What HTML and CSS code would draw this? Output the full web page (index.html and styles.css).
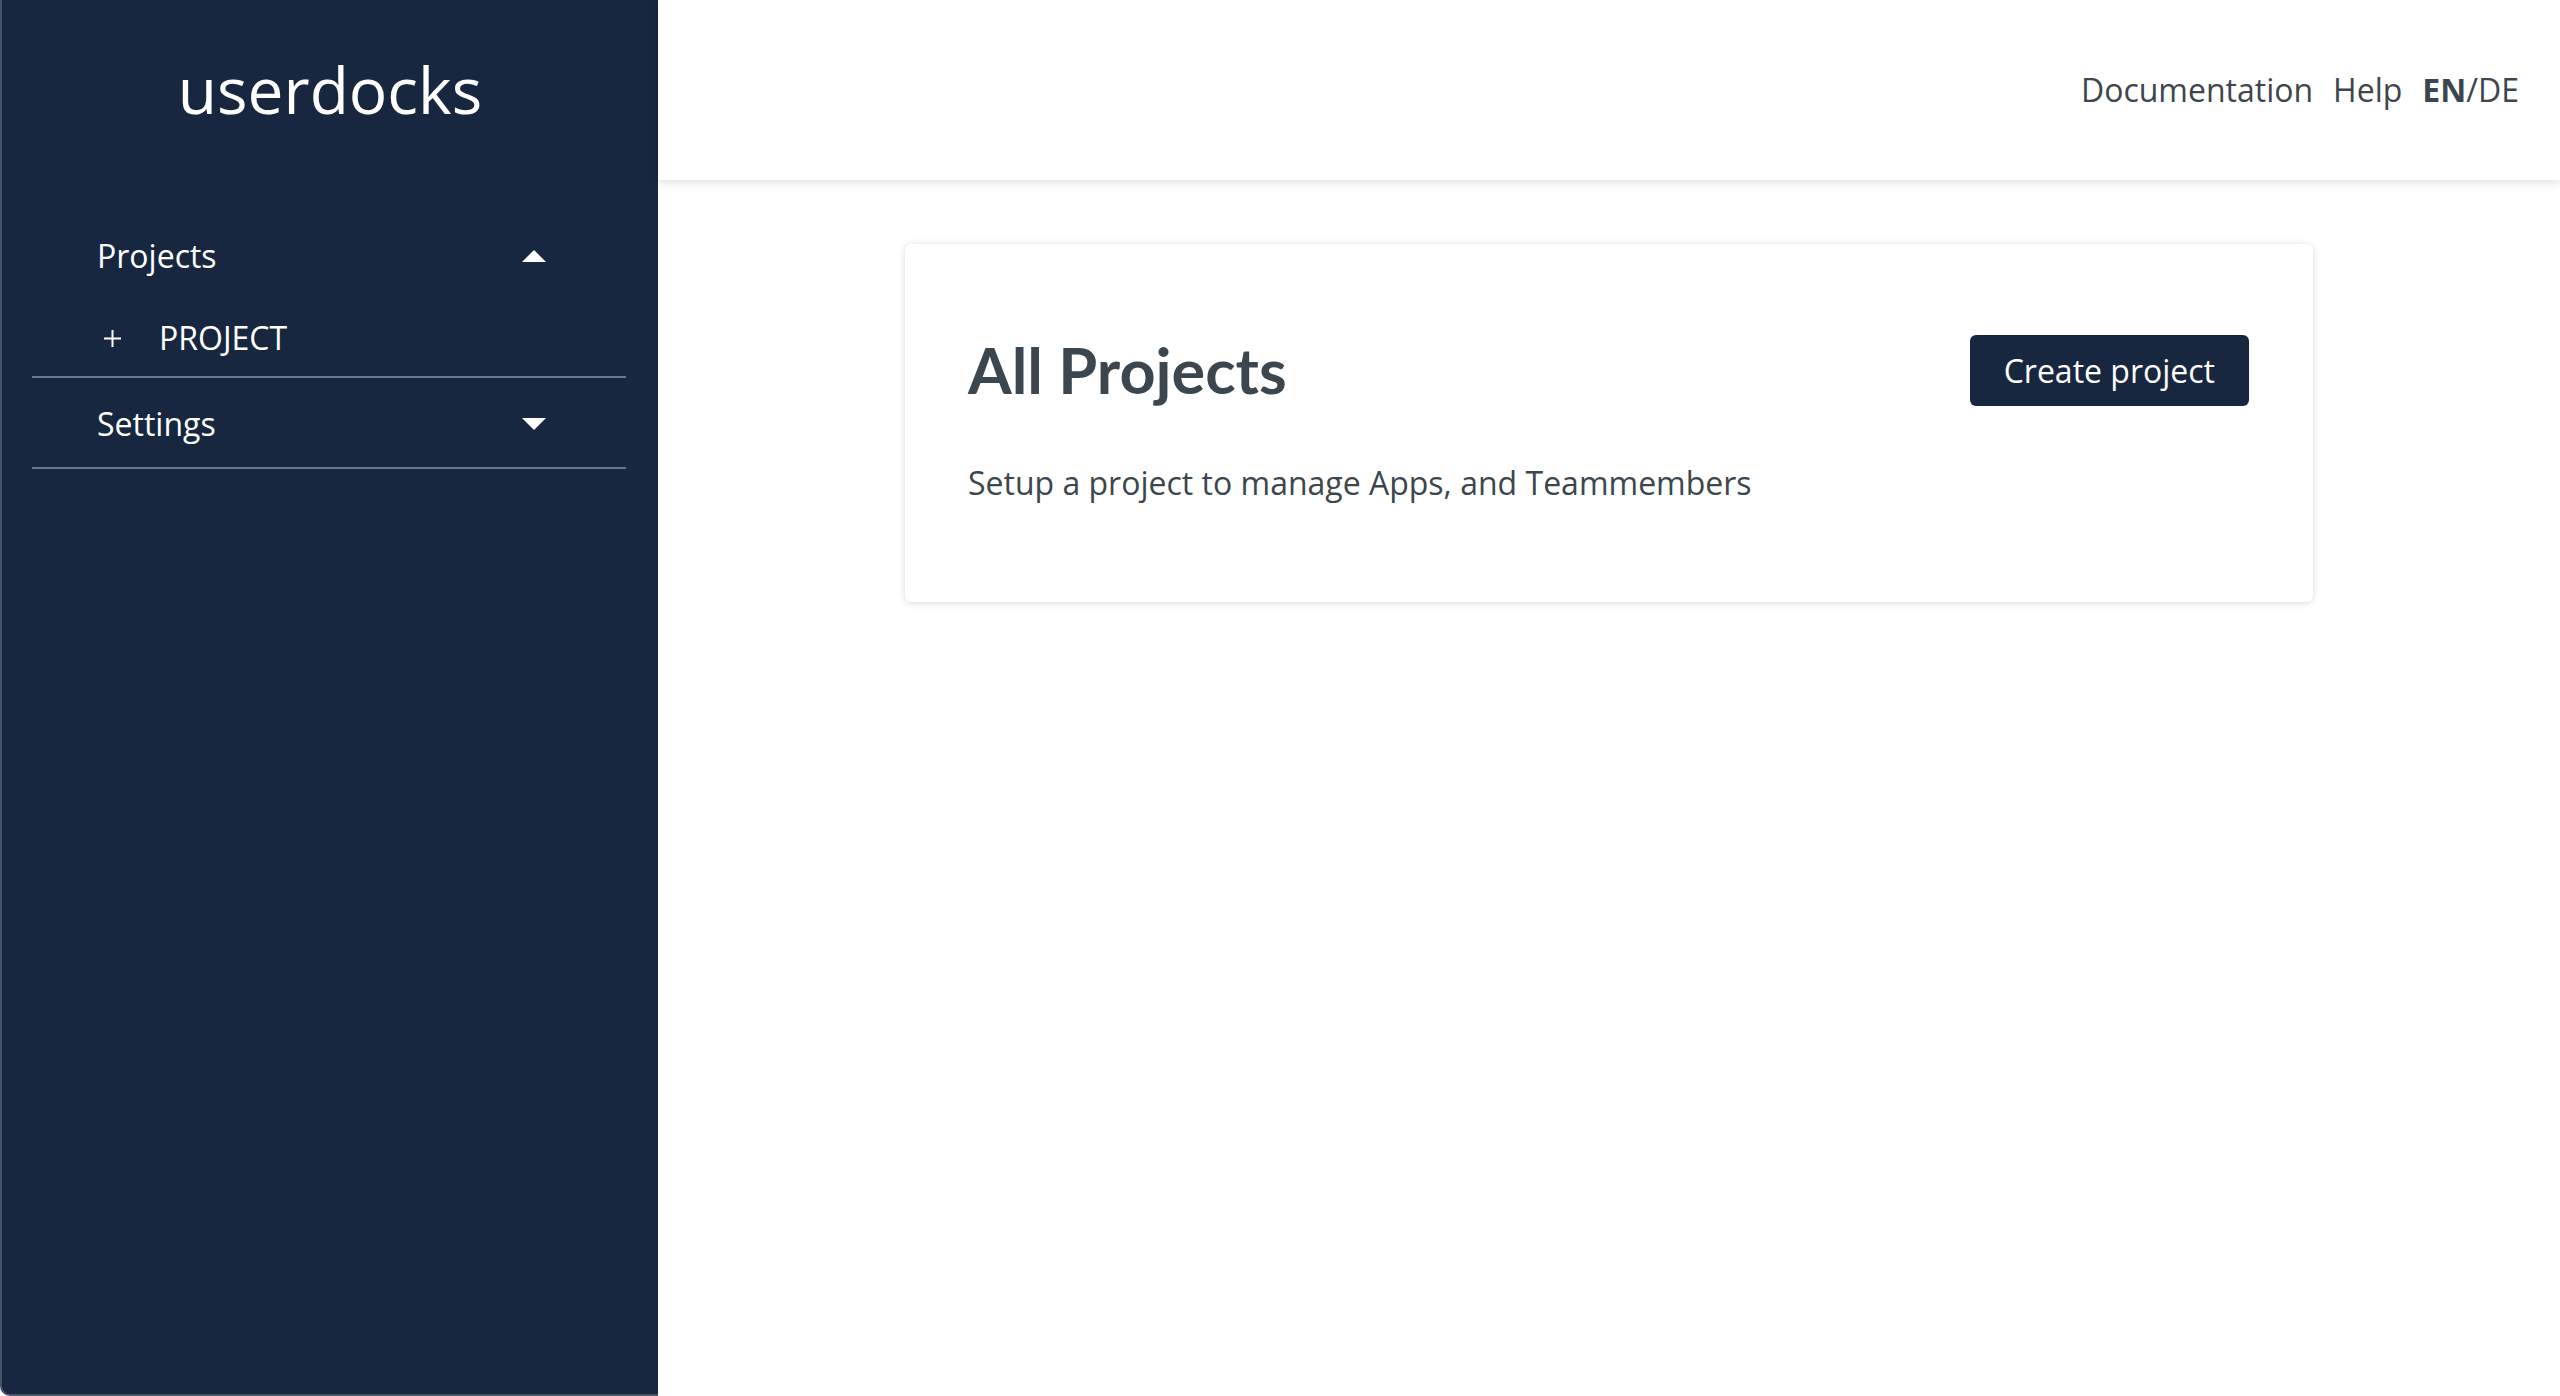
FILE: index.html
```html
<!DOCTYPE html>
<html lang="en">
<head>
<meta charset="utf-8">
<title>userdocks</title>
<link rel="stylesheet" href="styles.css">
</head>
<body>
<div class="app">
  <aside class="sidebar">
    <div class="logo">userdocks</div>
    <nav class="menu">
      <div class="group">
        <div class="menu-row">
          <span>Projects</span>
          <svg class="caret" width="24" height="12" viewBox="0 0 24 12"><path d="M0 12 L12 0 L24 12 Z" fill="#fff"/></svg>
        </div>
        <div class="sub-row">
          <svg class="plus" width="19" height="19" viewBox="0 0 19 19"><path d="M9.5 1 V18 M1 9.5 H18" stroke="#fff" stroke-width="2" fill="none"/></svg>
          <span>PROJECT</span>
        </div>
      </div>
      <div class="group">
        <div class="menu-row">
          <span>Settings</span>
          <svg class="caret" width="24" height="12" viewBox="0 0 24 12"><path d="M0 0 L24 0 L12 12 Z" fill="#fff"/></svg>
        </div>
      </div>
    </nav>
  </aside>
  <div class="main">
    <header class="topbar">
      <a class="nav-link">Documentation</a>
      <a class="nav-link">Help</a>
      <span class="nav-link lang"><b>EN</b>/DE</span>
    </header>
    <section class="content">
      <div class="card">
        <div class="card-head">
          <h1 class="card-title">All Projects</h1>
          <button class="btn">Create project</button>
        </div>
        <p class="card-text">Setup a project to manage Apps, and Teammembers</p>
      </div>
    </section>
  </div>
</div>
</body>
</html>
```
FILE: styles.css
```css
html, body {
  margin: 0;
  padding: 0;
  height: 100%;
}
body {
  font-family: "Open Sans", "Noto Sans", sans-serif;
  background: #ffffff;
  color: #3c464e;
}
.app {
  display: flex;
  height: 1396px;
}
.sidebar {
  box-sizing: border-box;
  width: 658px;
  flex: none;
  background: #182740;
  color: #ffffff;
  border-left: 2px solid #465266;
  border-bottom: 2px solid #465266;
  border-bottom-left-radius: 10px;
}
.logo {
  height: 180px;
  display: flex;
  align-items: center;
  justify-content: center;
  font-size: 64px;
  padding-bottom: 2px;
  box-sizing: border-box;
}
.menu {
  margin: 32px 32px 0 30px;
}
.group {
  border-bottom: 2px solid #6b7687;
}
.menu-row {
  display: flex;
  align-items: center;
  justify-content: space-between;
  padding: 20px 80px 20px 65px;
  font-size: 32px;
  line-height: 48px;
}
.group + .group .menu-row {
  padding-top: 22px;
  padding-bottom: 19px;
}
.caret {
  display: block;
}
.sub-row {
  display: flex;
  align-items: center;
  padding: 14px 0 14px 65px;
  font-size: 32px;
  line-height: 48px;
}
.plus {
  display: block;
  margin-left: 6px;
  margin-right: 37px;
}
.main {
  flex: 1;
  min-width: 0;
}
.topbar {
  height: 180px;
  display: flex;
  justify-content: flex-end;
  align-items: center;
  gap: 20px;
  padding-right: 41px;
  background: #ffffff;
  box-shadow: 0 2px 10px rgba(0, 0, 0, 0.14);
  position: relative;
}
.nav-link {
  font-size: 32px;
  line-height: 48px;
  color: #3c464e;
  text-decoration: none;
}
.lang b {
  font-weight: 700;
}
.content {
  display: flex;
  justify-content: center;
  padding-top: 64px;
}
.card {
  box-sizing: border-box;
  width: 1408px;
  padding: 88px 64px 95px 63px;
  background: #ffffff;
  border-radius: 6px;
  box-shadow: 0 1px 7px rgba(0, 0, 0, 0.16);
}
.card-head {
  display: flex;
  align-items: center;
  justify-content: space-between;
}
.card-title {
  margin: 0;
  font-family: "Lato", "Open Sans", sans-serif;
  font-weight: 700;
  font-size: 63px;
  line-height: 76px;
  color: #3c464e;
}
.btn {
  font-family: "Open Sans", "Noto Sans", sans-serif;
  font-size: 32px;
  line-height: 47px;
  padding: 12px 34px;
  border: none;
  border-radius: 6px;
  background: #182740;
  color: #ffffff;
}
.card-text {
  margin: 51px 0 0;
  font-size: 32px;
  line-height: 48px;
  color: #3c464e;
}
```
